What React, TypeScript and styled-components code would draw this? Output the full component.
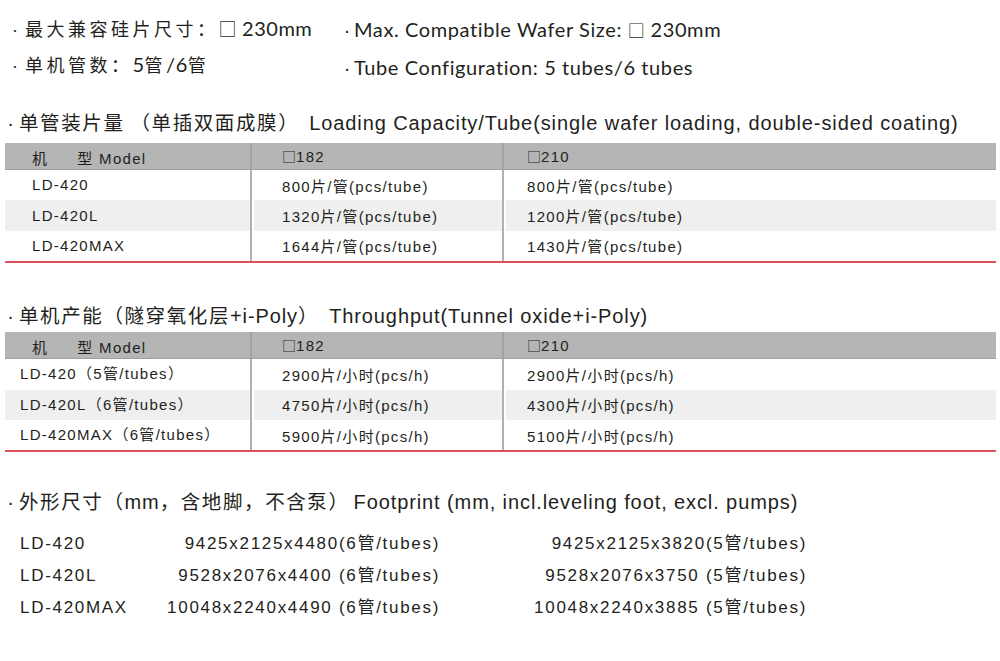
import React from "react";
import styled, { createGlobalStyle } from "styled-components";

const GlobalStyle = createGlobalStyle`
  html, body { margin: 0; padding: 0; background: #fff; }
  body {
    font-family: "Liberation Sans", "Noto Sans CJK SC", sans-serif;
    color: #231f20;
  }
`;

const Page = styled.div`
  width: 1000px;
  height: 661px;
  overflow: hidden;
  display: flex;
  flex-direction: column;
`;

const Intro = styled.div`
  display: grid;
  grid-template-columns: 335px 1fr;
  padding: 16px 0 0 5px;
`;

const IntroCol = styled.div<{ $gap: number; $top: number }>`
  display: flex;
  flex-direction: column;
  gap: ${(p) => p.$gap}px;
  padding-top: ${(p) => p.$top}px;
`;

const CnLine = styled.div`
  height: 24px;
  line-height: 24px;
  font-family: "Noto Sans CJK SC", sans-serif;
  font-size: 18px;
  letter-spacing: 3.5px;
  white-space: nowrap;
`;

const Humanist = styled.span`
  font-family: "Lato", sans-serif;
  font-size: 20px;
  letter-spacing: 0.5px;
`;

const EnLine = styled.div`
  height: 24px;
  line-height: 24px;
  font-family: "Lato", "Noto Sans CJK SC", sans-serif;
  font-size: 20px;
  letter-spacing: 0.6px;
  white-space: nowrap;
`;

const Box = styled.span<{ $size: number }>`
  font-family: "Noto Sans CJK SC", sans-serif;
  font-size: ${(p) => p.$size}px;
  letter-spacing: 0;
`;

const Bullet = styled.span<{ $w: number }>`
  display: inline-block;
  width: ${(p) => p.$w}px;
  text-align: center;
  letter-spacing: 0;
  font-family: "Liberation Sans", sans-serif;
`;

const Title = styled.div<{ $mt: number }>`
  height: 24px;
  line-height: 24px;
  margin-top: ${(p) => p.$mt}px;
  padding-left: 2px;
  font-size: 20px;
  white-space: nowrap;
`;

const TitleCn = styled.span`
  font-family: "Noto Sans CJK SC", sans-serif;
  letter-spacing: 1.6px;
  font-size: 19.5px;
`;

const TitleLatin = styled.span<{ $ml?: number }>`
  font-family: "Liberation Sans", sans-serif;
  letter-spacing: 0.9px;
  margin-left: ${(p) => p.$ml ?? 0}px;
`;

const Table = styled.div<{ $mt: number }>`
  margin: ${(p) => p.$mt}px 4px 0 5px;
  display: grid;
  grid-template-columns: 245px 252px 1fr;
  border-bottom: 2px solid #e0525b;
  font-size: 15px;
  letter-spacing: 1.3px;
  line-height: 18px;
`;

const HeadCell = styled.div<{ $divider?: boolean; $pt: number; $pl: number }>`
  height: 27px;
  box-sizing: border-box;
  background: #b4b5b4;
  border-bottom: 1px solid #9f9f9f;
  display: flex;
  align-items: center;
  padding: ${(p) => p.$pt}px 0 0 ${(p) => p.$pl}px;
  border-left: ${(p) => (p.$divider ? "2px solid #a2a2a2" : "none")};
  white-space: nowrap;
  &:last-child {
    border-right: 1px solid #9f9f9f;
  }
`;

const Cell = styled.div<{ $alt: boolean; $divider?: boolean; $pl: number; $pt: number }>`
  height: 30.4px;
  box-sizing: border-box;
  display: flex;
  align-items: center;
  padding: ${(p) => p.$pt}px 0 0 ${(p) => p.$pl}px;
  background: ${(p) => (p.$alt ? "#eeefee" : "#fff")};
  border-left: ${(p) => (p.$divider ? "2px solid #b0b0b0" : "none")};
  box-shadow: ${(p) => (p.$divider && p.$alt ? "inset 2px 0 0 #fff" : "none")};
  white-space: nowrap;
`;

const Spaced = styled.span`
  display: inline-block;
  width: 29px;
`;

const Footprint = styled.div`
  margin-top: 15px;
  display: grid;
  grid-template-columns: 120px 300px 367px;
  grid-auto-rows: 32px;
  padding-left: 20px;
  font-size: 17px;
  letter-spacing: 1.7px;
  line-height: 20px;
`;

const FpCell = styled.div<{ $right?: boolean }>`
  display: flex;
  align-items: center;
  justify-content: ${(p) => (p.$right ? "flex-end" : "flex-start")};
  white-space: nowrap;
`;

type Row = [string, string, string];

const loading: Row[] = [
  ["LD-420", "800片/管(pcs/tube)", "800片/管(pcs/tube)"],
  ["LD-420L", "1320片/管(pcs/tube)", "1200片/管(pcs/tube)"],
  ["LD-420MAX", "1644片/管(pcs/tube)", "1430片/管(pcs/tube)"],
];

const throughput: Row[] = [
  ["LD-420（5管/tubes）", "2900片/小时(pcs/h)", "2900片/小时(pcs/h)"],
  ["LD-420L（6管/tubes）", "4750片/小时(pcs/h)", "4300片/小时(pcs/h)"],
  ["LD-420MAX（6管/tubes）", "5900片/小时(pcs/h)", "5100片/小时(pcs/h)"],
];

const footprint: Row[] = [
  ["LD-420", "9425x2125x4480(6管/tubes)", "9425x2125x3820(5管/tubes)"],
  ["LD-420L", "9528x2076x4400 (6管/tubes)", "9528x2076x3750 (5管/tubes)"],
  ["LD-420MAX", "10048x2240x4490 (6管/tubes)", "10048x2240x3885 (5管/tubes)"],
];

function SpecTable({ rows, mt, modelPl }: { rows: Row[]; mt: number; modelPl: number }) {
  return (
    <Table $mt={mt}>
      <HeadCell $pt={5} $pl={27}>
        <span>机<Spaced />型 Model</span>
      </HeadCell>
      <HeadCell $divider $pt={0} $pl={30}>
        <span><Box $size={14}>□</Box>182</span>
      </HeadCell>
      <HeadCell $divider $pt={0} $pl={23}>
        <span><Box $size={14}>□</Box>210</span>
      </HeadCell>
      {rows.map((r, i) => (
        <React.Fragment key={r[0]}>
          <Cell $alt={i === 1} $pl={modelPl} $pt={0}>{r[0]}</Cell>
          <Cell $alt={i === 1} $divider $pl={30} $pt={3}>{r[1]}</Cell>
          <Cell $alt={i === 1} $divider $pl={23} $pt={3}>{r[2]}</Cell>
        </React.Fragment>
      ))}
    </Table>
  );
}

export default function App() {
  return (
    <>
      <GlobalStyle />
      <Page>
        <Intro>
          <IntroCol $gap={12} $top={0}>
            <CnLine>
              <Bullet $w={20}>·</Bullet>最大兼容硅片尺寸：<Box $size={18}>□</Box>
              <Humanist>&nbsp;230mm</Humanist>
            </CnLine>
            <CnLine>
              <Bullet $w={20}>·</Bullet>单机管数：<Humanist>5</Humanist>管<Humanist>/6</Humanist>管
            </CnLine>
          </IntroCol>
          <IntroCol $gap={14} $top={1}>
            <EnLine>
              <Bullet $w={14}>·</Bullet>Max. Compatible Wafer Size: <Box $size={17}>□</Box> 230mm
            </EnLine>
            <EnLine>
              <Bullet $w={14}>·</Bullet>Tube Configuration: 5 tubes/6 tubes
            </EnLine>
          </IntroCol>
        </Intro>

        <Title $mt={31}>
          <Bullet $w={17}>·</Bullet>
          <TitleCn>单管装片量 （单插双面成膜）</TitleCn>
          <TitleLatin $ml={10}>Loading Capacity/Tube(single wafer loading, double-sided coating)</TitleLatin>
        </Title>
        <SpecTable rows={loading} mt={9} modelPl={27} />

        <Title $mt={40}>
          <Bullet $w={17}>·</Bullet>
          <TitleCn>单机产能（隧穿氧化层</TitleCn>
          <TitleLatin>+i-Poly</TitleLatin>
          <TitleCn>）</TitleCn>
          <TitleLatin $ml={10}>Throughput(Tunnel oxide+i-Poly)</TitleLatin>
        </Title>
        <SpecTable rows={throughput} mt={5} modelPl={15} />

        <Title $mt={37}>
          <Bullet $w={17}>·</Bullet>
          <TitleCn>外形尺寸（</TitleCn>
          <TitleLatin>mm</TitleLatin>
          <TitleCn>，含地脚，不含泵）</TitleCn>
          <TitleLatin $ml={4}>Footprint (mm, incl.leveling foot, excl. pumps)</TitleLatin>
        </Title>
        <Footprint>
          {footprint.map((r) => (
            <React.Fragment key={r[0]}>
              <FpCell>{r[0]}</FpCell>
              <FpCell $right>{r[1]}</FpCell>
              <FpCell $right>{r[2]}</FpCell>
            </React.Fragment>
          ))}
        </Footprint>
      </Page>
    </>
  );
}
